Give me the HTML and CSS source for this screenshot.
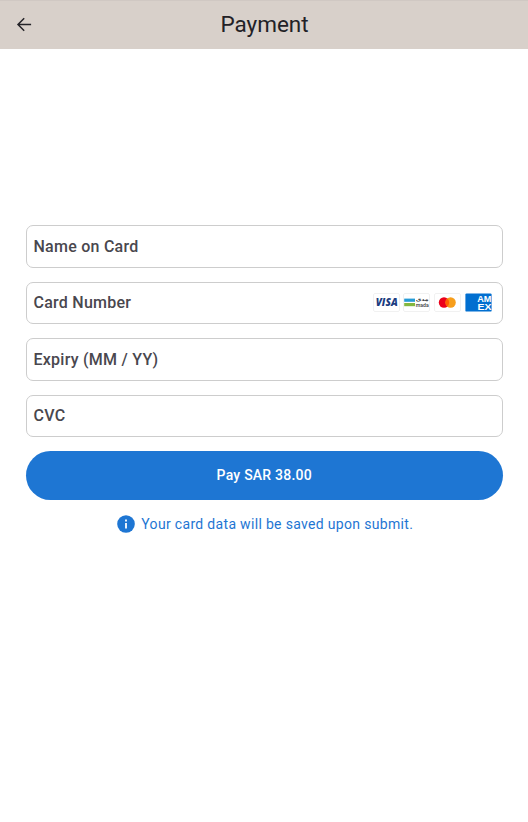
FILE: index.html
```html
<!DOCTYPE html>
<html lang="en">
<head>
<meta charset="utf-8">
<title>Payment</title>
<link rel="stylesheet" href="styles.css">
</head>
<body>
<header class="app-bar">
  <svg class="back" viewBox="0 0 16 16"><path d="M15.1 8.5H2M8.2 2.3 2 8.5l6.2 6.2"/></svg>
  <h1 class="title">Payment</h1>
</header>
<main class="form">
  <div class="field"><span class="label name">Name on Card</span></div>
  <div class="field">
    <span class="label number">Card Number</span>
    <div class="brands">
      <svg class="brand" viewBox="0 0 27 19"><rect class="tile" x=".5" y=".5" width="26" height="18" rx="1.5"/><text class="visa" x="2.7" y="13.2" textLength="22" lengthAdjust="spacingAndGlyphs">VISA</text></svg>
      <svg class="brand" viewBox="0 0 27 19"><rect class="tile" x=".5" y=".5" width="26" height="18" rx="1.5"/><rect x="1.2" y="5.6" width="10.8" height="3.2" fill="#259bd6"/><rect x="1.2" y="10" width="10.8" height="3.2" fill="#84b740"/><text class="mada-ar" x="12.7" y="8" textLength="13" lengthAdjust="spacingAndGlyphs">مدى</text><text class="mada" x="12.7" y="13.6" textLength="13" lengthAdjust="spacingAndGlyphs">mada</text></svg>
      <svg class="brand" viewBox="0 0 27 19"><rect class="tile" x=".5" y=".5" width="26" height="18" rx="1.5"/><circle cx="10" cy="9.5" r="5.2" fill="#eb001b"/><circle cx="16.6" cy="9.5" r="5.2" fill="#f79e1b"/><path d="M13.3 5.5a5.2 5.2 0 0 1 0 8a5.2 5.2 0 0 1 0-8Z" fill="#ff5f00"/></svg>
      <svg class="brand" viewBox="0 0 27 19"><rect x=".4" y=".4" width="26.2" height="18.2" rx="1.2" fill="#016fd0"/><text class="amex" x="12.2" y="8.8" textLength="14.2" lengthAdjust="spacingAndGlyphs">AM</text><text class="amex" x="12.4" y="16.6" textLength="14" lengthAdjust="spacingAndGlyphs">EX</text></svg>
    </div>
  </div>
  <div class="field"><span class="label expiry">Expiry (MM / YY)</span></div>
  <div class="field"><span class="label cvc">CVC</span></div>
  <button class="pay">Pay SAR 38.00</button>
  <p class="notice">
    <svg class="info" viewBox="0 0 18 18"><circle cx="9" cy="9" r="8.8" fill="#1e76d3"/><path d="M8.1 4.6h1.8v1.8H8.1zM8.1 8.1h1.8v5.3H8.1z" fill="#fff"/></svg>
    <span>Your card data will be saved upon submit.</span>
  </p>
</main>
</body>
</html>
```
FILE: styles.css
```css
* { box-sizing: border-box; }
body {
  margin: 0;
  background: #fff;
  font-family: Roboto, sans-serif;
}
.app-bar {
  height: 49px;
  display: grid;
  grid-template-columns: 49px 1fr 48px;
  align-items: center;
  background: #d8d0ca;
  border-top: 1px solid #d0c8c3;
}
.back {
  width: 16px;
  height: 16px;
  margin: -2px 0 0 16px;
  fill: none;
  stroke: #242328;
  stroke-width: 1.5;
}
.title {
  margin: -2px 0 0;
  text-align: center;
  font-size: 22.5px;
  line-height: 28px;
  font-weight: 400;
  letter-spacing: 0;
  color: #222126;
}
.form {
  padding: 176.2px 25px 0 25.5px;
  display: flex;
  flex-direction: column;
  gap: 14px;
}
.field {
  height: 42.5px;
  display: flex;
  align-items: center;
  justify-content: space-between;
  padding: 0 10px 0 7px;
  border: 1px solid #cdcdcd;
  border-radius: 7px;
}
.label {
  padding-top: 1px;
  font-size: 16px;
  line-height: 22px;
  font-weight: 500;
  letter-spacing: 0.25px;
  color: #49474e;
}
.brands {
  display: flex;
  gap: 3.8px;
}
.brand {
  width: 27px;
  height: 19px;
}
.tile {
  fill: #fff;
  stroke: #f1f1f1;
}
.visa {
  font: italic 800 9.6px "Open Sans", sans-serif;
  fill: #1b3c80;
}
.mada {
  font: 500 5.6px Roboto, sans-serif;
  fill: #3b3c3d;
}
.mada-ar {
  font: 700 5px "DejaVu Sans", sans-serif;
  fill: #3b3c3d;
}
.amex {
  font: 700 8.2px/1 "Liberation Sans", sans-serif;
  fill: #fff;
}
.pay {
  height: 48.5px;
  border: 0;
  border-radius: 25px;
  background: #1e76d3;
  color: #fff;
  font: 500 14px/20px Roboto, sans-serif;
  letter-spacing: 0.22px;
}
.notice {
  margin: 0;
  padding-left: 2px;
  display: flex;
  align-items: center;
  justify-content: center;
  gap: 6px;
  font-size: 14px;
  line-height: 20px;
  letter-spacing: 0.32px;
  color: #1e76d3;
}
.info {
  width: 18px;
  height: 18px;
}
```
